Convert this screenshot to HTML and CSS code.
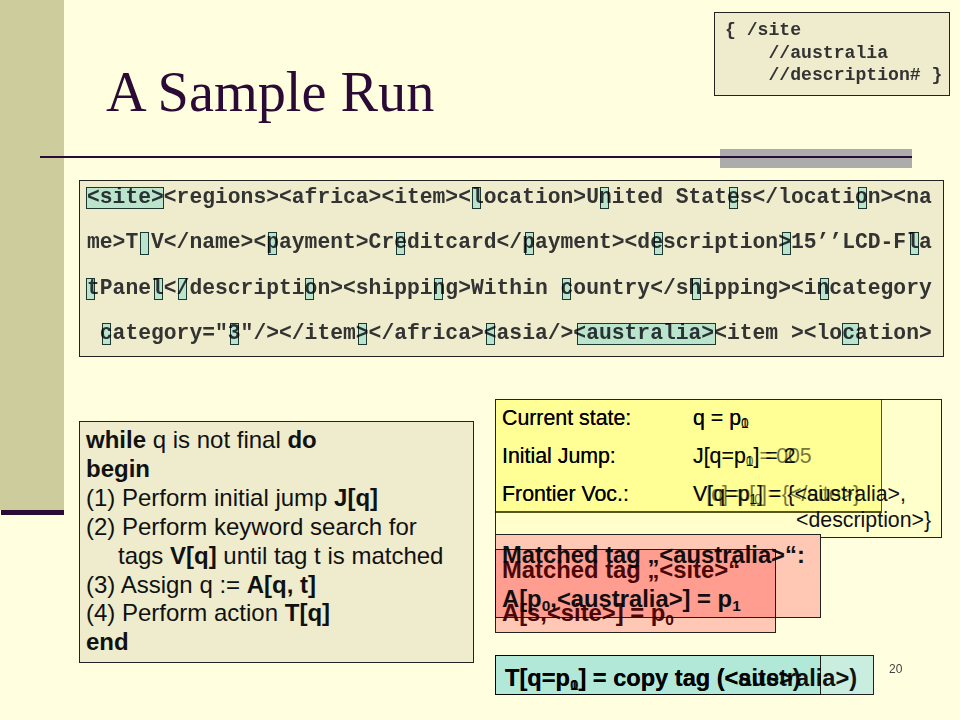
FILE: index.html
```html
<!DOCTYPE html>
<html>
<head>
<meta charset="utf-8">
<title>A Sample Run</title>
<link rel="stylesheet" href="styles.css">
</head>
<body>
<main class="slide">
  <div class="side"></div>
  <div class="side-rule"></div>
  <div class="accent"></div>
  <div class="title-rule"></div>
  <h1 class="title">A Sample Run</h1>

  <pre class="query">{ /site
    //australia
    //description# }</pre>

  <section class="xml">
    <pre class="xml-text">&lt;site&gt;&lt;regions&gt;&lt;africa&gt;&lt;item&gt;&lt;location&gt;United States&lt;/location&gt;&lt;na
me&gt;T V&lt;/name&gt;&lt;payment&gt;Creditcard&lt;/payment&gt;&lt;description&gt;15’’LCD-Fla
tPanel&lt;/description&gt;&lt;shipping&gt;Within country&lt;/shipping&gt;&lt;incategory
 category="3"/&gt;&lt;/item&gt;&lt;/africa&gt;&lt;asia/&gt;&lt;australia&gt;&lt;item &gt;&lt;location&gt;</pre>
  </section>
  <i class="hl r1" style="left:87px;width:76px"></i>
  <i class="hl r1" style="left:473px"></i>
  <i class="hl r1" style="left:601px"></i>
  <i class="hl r1" style="left:730px"></i>
  <i class="hl r1" style="left:859px"></i>
  <i class="hl r2" style="left:141px"></i>
  <i class="hl r2" style="left:269px"></i>
  <i class="hl r2" style="left:397px"></i>
  <i class="hl r2" style="left:526px"></i>
  <i class="hl r2" style="left:655px"></i>
  <i class="hl r2" style="left:783px"></i>
  <i class="hl r2" style="left:911px"></i>
  <i class="hl r3" style="left:87px"></i>
  <i class="hl r3" style="left:155px"></i>
  <i class="hl r3" style="left:179px"></i>
  <i class="hl r3" style="left:306px"></i>
  <i class="hl r3" style="left:435px"></i>
  <i class="hl r3" style="left:563px"></i>
  <i class="hl r3" style="left:693px"></i>
  <i class="hl r3" style="left:821px"></i>
  <i class="hl r4" style="left:103px"></i>
  <i class="hl r4" style="left:231px"></i>
  <i class="hl r4" style="left:359px"></i>
  <i class="hl r4" style="left:487px"></i>
  <i class="hl r4" style="left:578px;width:137px"></i>
  <i class="hl r4" style="left:843px;width:15px"></i>

  <section class="algo">
    <div><b>while</b> q is not final <b>do</b></div>
    <div><b>begin</b></div>
    <div>(1) Perform initial jump <b>J[q]</b></div>
    <div>(2) Perform keyword search for</div>
    <div class="indent">tags <b>V[q]</b> until tag t is matched</div>
    <div>(3) Assign q := <b>A[q, t]</b></div>
    <div>(4) Perform action <b>T[q]</b></div>
    <div><b>end</b></div>
  </section>

  <section class="state-back">
    <div class="row"><span>Current state:</span><span>q = p<sub>1</sub></span></div>
    <div class="row"><span>Initial Jump:</span><span>J[q=p<sub>1</sub>] = 2</span></div>
    <div class="row"><span>Frontier Voc.:</span><span>V[q=p<sub>1</sub>] = {&lt;australia&gt;,</span></div>
    <div class="cont">&lt;description&gt;}</div>
  </section>
  <section class="state-front">
    <div class="row"><span>Current state:</span><span>q = p<sub>0</sub></span></div>
    <div class="row"><span>Initial Jump:</span><span class="faded">J[q=p<sub>0</sub>]=&#8201;005</span></div>
    <div class="row"><span>Frontier Voc.:</span><span class="faded"><span class="tight">V[q]=p[<sub>0</sub>]</span>&#8202;=&#8202;{&lt;/site&gt;}</span></div>
  </section>

  <section class="match-back">
    <div class="m1">Matched tag „&lt;australia&gt;“:</div>
    <div class="m2">A[p<sub>0</sub>,&lt;australia&gt;] = p<sub>1</sub></div>
  </section>
  <section class="match-front">
    <div class="m1">Matched tag „&lt;site&gt;“</div>
    <div class="m2">A[s,&lt;site&gt;] = p<sub>0</sub></div>
  </section>

  <section class="copy copy-back">T[q=p<sub>1</sub>] = copy tag (&lt;australia&gt;)</section>
  <section class="copy copy-front">T[q=p<sub>0</sub>] = copy tag (&lt;site&gt;)</section>

  <div class="page">20</div>
</main>
</body>
</html>
```

FILE: styles.css
```css
html, body { margin: 0; padding: 0; }
body { width: 960px; height: 720px; overflow: hidden; background: #ffffe0; }
.slide {
  position: relative; width: 960px; height: 720px; background: #ffffe0;
  font-family: "Liberation Sans", Arial, sans-serif; color: #111;
}
.side { position: absolute; left: 0; top: 0; width: 64px; height: 510px; background: #cccc9c; }
.side-rule { position: absolute; left: 1px; top: 510px; width: 63px; height: 5px; background: #2b0b35; }
.accent { position: absolute; left: 720px; top: 149px; width: 192px; height: 19px; background: #acacac; }
.title-rule { position: absolute; left: 40px; top: 156px; width: 872px; height: 2px; background: #2b0b35; }
.title {
  position: absolute; left: 106px; top: 60px; margin: 0;
  font: 400 56.3px/64px "Liberation Serif", "Times New Roman", serif; color: #2b0b35;
}
.query {
  position: absolute; left: 714px; top: 12px; width: 236px; height: 84px; margin: 0;
  padding: 6px 0 0 10px; box-sizing: border-box;
  background: #eeeccc; border: 1px solid #222;
  font: 700 18.13px/22.7px "Liberation Mono", "Courier New", monospace; color: #333;
}
.xml {
  position: absolute; left: 79px; top: 180px; width: 865px; height: 177px;
  background: #eeeccc; border: 1px solid #222; box-sizing: border-box; overflow: hidden;
}
.xml-text {
  margin: -6.5px 0 0; padding: 0 0 0 7px;
  font: 700 21.33px/45.5px "Liberation Mono", "Courier New", monospace; color: #333;
}
.hl {
  position: absolute; width: 7px; margin: -1px;
  background: #c7f8ff; border: 1px solid #1d3b3b; mix-blend-mode: multiply;
}
.r1 { top: 188px; height: 20px; }
.r2 { top: 233px; height: 21px; }
.r3 { top: 279px; height: 20px; }
.r4 { top: 324px; height: 20px; }
.algo {
  position: absolute; left: 79px; top: 421px; width: 395px; height: 242px;
  background: #eeeccc; border: 1px solid #222; padding: 4px 0 0 6px; box-sizing: border-box;
  font-size: 24px; line-height: 28.9px; color: #111;
}
.indent { padding-left: 32px; }
.state-back {
  position: absolute; left: 495px; top: 399px; width: 447px; height: 139px;
  box-sizing: border-box; background: #ffffcc; border: 1px solid #222; padding: 2.5px 0 0 6px;
}
.state-front {
  position: absolute; left: 495px; top: 399px; width: 387px; height: 114px;
  box-sizing: border-box; background: #ffffbb; mix-blend-mode: multiply;
  border-right: 1px solid #555522; border-bottom: 2px solid #555522; padding: 3.5px 0 0 7px;
}
.row {
  display: grid; grid-template-columns: 191px auto; height: 38.3px;
  font-size: 21.33px; line-height: 30px; white-space: nowrap;
}
.faded { color: #77774a; }
.tight { letter-spacing: -1px; }
.cont { position: absolute; left: 300px; top: 108px; font-size: 21.33px; line-height: 25px; }
sub { font-size: .65em; line-height: 0; vertical-align: -.25em; }
.match-back {
  position: absolute; left: 495px; top: 534px; width: 326px; height: 84px;
  box-sizing: border-box; background: #ffc8b4; border: 1px solid #222; padding: 8px 0 0 6px;
}
.match-front {
  position: absolute; left: 495px; top: 549px; width: 281px; height: 84px;
  box-sizing: border-box; background: #ffc8cd; border: 1px solid #222; padding: 8px 0 0 6px;
  color: #4a0808; mix-blend-mode: multiply;
}
.m1, .m2 { font-size: 23.8px; font-weight: 700; line-height: 24px; white-space: nowrap; }
.m2 { margin-top: 20px; }
.match-front .m2 { margin-top: 19px; }
.copy {
  position: absolute; left: 495px; top: 655px; height: 40px; box-sizing: border-box;
  border: 1px solid #222; padding: 3px 0 0 9px;
  font-size: 23.6px; font-weight: 700; line-height: 38px; white-space: nowrap;
}
.copy-back { width: 379px; background: #c9eddf; }
.copy-front { width: 326px; background: #e2faf6; mix-blend-mode: multiply; }
.page { position: absolute; left: 889px; top: 662px; font-size: 12px; line-height: 14px; color: #444; }
```
